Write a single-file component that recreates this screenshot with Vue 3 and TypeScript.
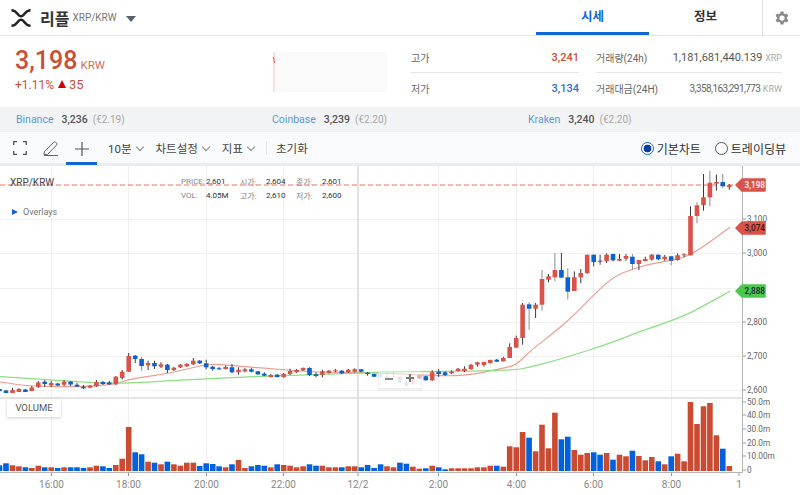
<template>
  <div class="page">
    <header class="top">
      <div class="coin">
        <svg class="logo" viewBox="0 0 20 18" width="20" height="18">
          <path d="M.5 1.200C4.500 1.200 5.500 3.600 7.500 6 8.800 7.600 11.200 7.600 12.500 6 14.500 3.600 15.500 1.200 19.500 1.200M.5 16.800C4.500 16.800 5.500 14.400 7.500 12 8.800 10.400 11.200 10.400 12.500 12 14.500 14.400 15.500 16.800 19.500 16.800" fill="none" stroke="#222" stroke-width="2.500" />
        </svg>
        <span class="coin-name">리플</span>
        <span class="coin-pair">XRP/KRW</span>
        <span class="caret"></span>
      </div>
      <nav class="tabs">
        <div class="tab active">시세</div>
        <div class="tab">정보</div>
        <div class="gear">
          <svg viewBox="1 0 24 24" width="18" height="18">
            <path fill="#8a8a8a" d="M19.400 13a7.500 7.500 0 0 0 0-2l2.100-1.600-2-3.500-2.500 1a7.600 7.600 0 0 0-1.700-1L15 3.200h-4l-.4 2.700a7.600 7.600 0 0 0-1.700 1l-2.500-1-2 3.500L6.500 11a7.500 7.500 0 0 0 0 2l-2.100 1.600 2 3.500 2.500-1a7.600 7.600 0 0 0 1.700 1l.4 2.700h4l.4-2.700a7.600 7.600 0 0 0 1.700-1l2.500 1 2-3.500zM13 15.500a3.500 3.500 0 1 1 0-7 3.500 3.500 0 0 1 0 7z" />
          </svg>
        </div>
      </nav>
    </header>

    <section class="stats">
      <div class="price">
        <div class="now"><span class="now-value">3,198</span><span class="now-unit">KRW</span></div>
        <div class="change">+1.11% <i class="up"></i> <span class="diff">35</span></div>
      </div>
      <svg class="spark" viewBox="0 0 114 40" width="114" height="40">
        <line x1="1" y1="0" x2="1" y2="40" stroke="#f3c9c2" stroke-width="1" />
        <line x1="0.5" y1="5" x2="1.5" y2="11" stroke="#d0614d" stroke-width="1" />
      </svg>
      <div class="hilo">
        <div class="row"><span>고가</span><b class="red">3,241</b></div>
        <div class="row"><span>저가</span><b class="blue">3,134</b></div>
      </div>
      <div class="volume">
        <div class="row">
          <span>거래량(24h)</span>
          <em class="big">1,181,681,440.139 <small>XRP</small></em>
        </div>
        <div class="row">
          <span>거래대금(24H)</span>
          <em><u>3,358,163,291,773</u> <small>KRW</small></em>
        </div>
      </div>
    </section>

    <section class="exchanges">
      <div v-for="ex in exchanges" :key="ex.name" class="exchange">
        <span class="ex-name">{{ ex.name }}</span>
        <b>{{ ex.price }}</b>
        <span class="ex-eur">({{ ex.eur }})</span>
      </div>
    </section>

    <section class="toolbar">
      <svg class="tool-full" viewBox="0 0 14 14" width="14" height="14">
        <path d="M.7 4V.7H4M10 .7h3.300V4M13.300 10v3.300H10M4 13.300H.7V10" fill="none" stroke="#555" stroke-width="1.300" />
      </svg>
      <svg class="tool-pen" viewBox="0 0 16 16" width="16" height="16">
        <path d="M1.500 11.500 10.800 2.200a1.300 1.300 0 0 1 1.900 0l.9.9a1.300 1.300 0 0 1 0 1.900L4.500 14.500H1z M1 15.500h14" fill="none" stroke="#666" stroke-width="1" />
      </svg>
      <div class="tool-cross">
        <svg viewBox="0 0 14 14" width="14" height="14">
          <path d="M7 0v14M0 7h14" stroke="#555" stroke-width="1.200" />
        </svg>
      </div>
      <button class="menu first">10분<i></i></button>
      <button class="menu">차트설정<i></i></button>
      <button class="menu">지표<i></i></button>
      <span class="tool-sep"></span>
      <button class="menu plain">초기화</button>
      <div class="views">
        <span class="radio on"></span><span class="view">기본차트</span>
        <span class="radio"></span><span class="view">트레이딩뷰</span>
      </div>
    </section>

    <section class="chart">
      <svg class="plot" viewBox="0 167 800 328" width="800" height="328">
        <line v-for="y in gridY" :key="'h' + y" x1="0" :x2="742" :y1="y" :y2="y" stroke="#f1f1f1" />
        <line v-for="x in gridX" :key="'v' + x" :x1="x" :x2="x" y1="167" y2="473" stroke="#efefef" />
        <line x1="358" x2="358" y1="167" y2="473" stroke="#e2e2e2" stroke-width="2" />
        <line class="last-price" x1="0" x2="736" y1="186" y2="186" />

        <path :d="maRed" fill="none" stroke="#ee9c92" stroke-width="1.200" />
        <path :d="maGreen" fill="none" stroke="#8ede86" stroke-width="1.200" />

        <g v-for="c in candles" :key="c.i">
          <line :x1="c.x" :x2="c.x" :y1="c.wickTop" :y2="c.wickBottom" :stroke="c.wick" stroke-width="1" :opacity="c.faded ? 0.25 : 1" />
          <rect :x="c.x - 2.3" :y="c.top" width="4.6" :height="c.height" :fill="c.color" :opacity="c.faded ? 0.25 : 1" />
        </g>

        <line x1="0" x2="742" y1="399" y2="399" stroke="#dcdcdc" stroke-width="1.500" />
        <rect v-for="c in candles" :key="'vol' + c.i" :x="c.x - 2.8" :y="472 - c.vol" width="5.6" :height="c.vol" :fill="c.barColor" />
        <line x1="0" x2="742" y1="473.5" y2="473.5" stroke="#b5b5b5" />
        <line x1="742.5" x2="742.5" y1="167" y2="474" stroke="#b5b5b5" />

        <g v-for="t in priceTicks" :key="t.label">
          <line x1="743" x2="746" :y1="t.y" :y2="t.y" stroke="#999" />
          <text class="tick" x="747" :y="t.y + 3">{{ t.label }}</text>
        </g>
        <g v-for="t in volTicks" :key="t.label">
          <line x1="743" x2="746" :y1="t.y" :y2="t.y" stroke="#999" />
          <text class="tick" x="747" :y="t.y + 3">{{ t.label }}</text>
        </g>
        <g v-for="t in timeTicks" :key="t.label">
          <line :x1="t.x" :x2="t.x" y1="474" y2="477" stroke="#999" />
          <text class="time" :x="t.x" y="488.500" text-anchor="middle">{{ t.label }}</text>
        </g>

        <g v-for="t in tags" :key="t.label">
          <path :d="tagPath(t.y)" :fill="t.color" :stroke="t.color" stroke-width="1.500" stroke-linejoin="round" />
          <text class="tag" x="744.500" :y="t.y + 3" :fill="t.text">{{ t.label }}</text>
        </g>
      </svg>

      <div class="legend">
        <div class="symbol">XRP/KRW</div>
        <div class="ohlc">
          <span class="k">PRICE:</span><span class="v">2,601</span>
          <span class="k">시가:</span><span class="v">2,604</span>
          <span class="k">종가:</span><span class="v">2,601</span>
          <span class="k">VOL:</span><span class="v">4.05M</span>
          <span class="k">고가:</span><span class="v">2,610</span>
          <span class="k">저가:</span><span class="v">2,600</span>
        </div>
        <div class="overlays"><i></i>Overlays</div>
      </div>

      <div class="zoomer"><span class="minus"></span><span class="plus"></span></div>
      <div class="vol-label">VOLUME</div>
    </section>
  </div>
</template>

<script setup lang="ts">
type Raw = [number, number, number, number, 'r' | 'b'];

interface Exchange {
  name: string;
  price: string;
  eur: string;
}

const exchanges: Exchange[] = [
  { name: 'Binance', price: '3,236', eur: '€2.19' },
  { name: 'Coinbase', price: '3,239', eur: '€2.20' },
  { name: 'Kraken', price: '3,240', eur: '€2.20' }
];

const gridY = [220.5, 254.5, 289.5, 323.5, 357.5, 391.5];
const gridX = [51.5, 128.5, 206.5, 283.5, 438.5, 516.5, 593.5, 671.5];

const priceTicks = [
  { label: '3,100', y: 220 },
  { label: '3,000', y: 254 },
  { label: '2,800', y: 323 },
  { label: '2,700', y: 357 },
  { label: '2,600', y: 391 }
];
const volTicks = [
  { label: '50.0m', y: 403 },
  { label: '40.0m', y: 416 },
  { label: '30.0m', y: 430 },
  { label: '20.0m', y: 444 },
  { label: '10.00m', y: 457 },
  { label: '0', y: 471 }
];
const timeTicks = [
  { label: '16:00', x: 51.5 },
  { label: '18:00', x: 128.5 },
  { label: '20:00', x: 206.5 },
  { label: '22:00', x: 283.5 },
  { label: '12/2', x: 358 },
  { label: '2:00', x: 438.5 },
  { label: '4:00', x: 516.5 },
  { label: '6:00', x: 593.5 },
  { label: '8:00', x: 671.5 },
  { label: '1', x: 739 }
];
const tags = [
  { label: '3,198', y: 186, color: '#d9534a', text: '#fff' },
  { label: '3,074', y: 229, color: '#d9534a', text: '#3a1512' },
  { label: '2,888', y: 292, color: '#4cc851', text: '#123' }
];

const tagPath = (y: number) =>
  `M736 ${y} L742 ${y - 6} H765 V${y + 6} H742 Z`;

// top, bottom of body and wick, pixel rows, from candle -20 (far left) on
const raw: Raw[] = [
  [390, 392, 390, 392, 'b'], [391.5, 394, 391, 394, 'b'], [391, 394, 389, 394, 'r'], [390, 393, 389, 393, 'r'],
  [390.5, 393, 390, 393, 'b'], [388.5, 392, 387, 392, 'r'], [383.5, 388, 382, 389, 'r'], [382.7, 385, 381, 388, 'b'],
  [384, 386.5, 382, 388, 'r'], [384.5, 386.5, 384, 387, 'b'], [382.7, 385.7, 381, 387, 'r'], [382.7, 385.5, 382, 387, 'b'],
  [385.7, 387.7, 384, 388, 'b'], [387.7, 389.3, 386, 390, 'b'], [386.7, 388.7, 386, 389, 'r'], [383, 387.3, 381, 388, 'r'],
  [383, 385, 382, 386, 'b'], [383.5, 385.3, 382, 386, 'b'], [377.7, 385.3, 377, 386, 'r'], [372.7, 379, 371, 380.5, 'r'],
  [357, 372.7, 354, 373, 'r'], [356.7, 360, 356, 364, 'b'], [360, 367, 358, 371.7, 'b'], [364, 366.3, 361.7, 371, 'r'],
  [364, 367.3, 361.7, 370, 'b'], [365.3, 367.7, 363.3, 369, 'r'], [365.7, 371, 365, 374, 'b'], [368.7, 371, 368, 372, 'r'],
  [365.7, 368.3, 365, 369, 'r'], [365, 367.3, 364, 368, 'r'], [361.7, 365.3, 359, 366, 'r'], [361.7, 364.3, 361, 365, 'b'],
  [364.3, 368.3, 360.7, 370.3, 'b'], [367.7, 370, 366.7, 371.7, 'b'], [369.3, 370.3, 368, 371, 'b'], [368, 370, 366.7, 370.5, 'r'],
  [368.3, 373.3, 365, 374, 'b'], [370.7, 373.3, 368.3, 375.7, 'r'], [370.3, 372.3, 369, 373.3, 'r'], [370.3, 372.7, 369, 373.3, 'b'],
  [372.3, 375.3, 372, 376, 'b'], [374.7, 376.7, 373.3, 377, 'b'], [376, 378, 375, 378.5, 'r'], [375.7, 378, 375, 378.5, 'b'],
  [375, 378, 374, 378.7, 'r'], [372, 375, 369.7, 376, 'r'], [371, 373.3, 370, 374, 'r'], [369, 371.3, 368.5, 372, 'r'],
  [369, 376, 368.3, 377, 'b'], [375.3, 377, 373.3, 378.3, 'b'], [372.3, 375.7, 370.7, 378.3, 'r'], [371.7, 374, 371, 374.7, 'r'],
  [371.3, 372, 370, 373.3, 'r'], [371.7, 374.3, 371, 375, 'b'], [370.7, 373.3, 370, 374, 'r'], [370.3, 372.7, 369.3, 373.3, 'r'],
  [370.3, 372.7, 370, 373.3, 'b'], [373.7, 375, 373, 376.7, 'b'], [375, 377.7, 374.7, 378, 'b'], [375, 378, 374, 379, 'b'],
  [378, 379.5, 372, 380, 'r'], [377, 378, 372, 380, 'r'], [377.7, 383.3, 377, 384, 'b'], [383, 386.7, 382, 387, 'b'],
  [379.3, 385, 379, 386, 'r'], [376, 379.3, 375.5, 380, 'r'], [377.3, 381.3, 377, 381.5, 'b'], [373.3, 381.3, 371.3, 382, 'r'],
  [372.7, 375, 370, 378, 'b'], [373.3, 376, 372.3, 377, 'b'], [372.7, 374.3, 371.3, 375, 'r'], [369.7, 372, 369, 372.5, 'r'],
  [369.7, 372, 367.3, 373, 'r'], [365.7, 370.3, 365, 370.5, 'r'], [363.3, 365.7, 362.7, 367.7, 'r'], [363, 366, 362.7, 367.7, 'r'],
  [361, 364, 360.7, 364.5, 'r'], [360.7, 362.7, 360, 363, 'b'], [359, 362.3, 357.7, 362.5, 'r'], [348, 359, 344.3, 359, 'r'],
  [339, 348.7, 336.7, 348.7, 'r'], [305.7, 339, 304, 345.7, 'r'], [305.3, 309.7, 303.3, 330.7, 'b'], [305.7, 309.7, 304, 319, 'r'],
  [280, 305.7, 271, 311.7, 'r'], [277.3, 280.7, 275, 283.3, 'r'], [271, 278.3, 254, 282.3, 'r'], [271, 278.7, 254, 278.7, 'b'],
  [278.3, 292.7, 269.3, 300.3, 'b'], [278.3, 292, 272.3, 292, 'r'], [274, 278.3, 270, 284.3, 'r'], [255.7, 274, 255.7, 275, 'r'],
  [255.7, 263, 255.7, 267.3, 'b'], [261.7, 262.7, 255.7, 265.7, 'b'], [255.7, 262, 254.3, 264, 'r'], [255, 261.3, 254.7, 262.3, 'b'],
  [260, 261.7, 255, 262.3, 'r'], [257, 259.7, 255, 261.7, 'r'], [257.7, 265, 255, 270.7, 'b'], [261, 265, 261, 271, 'r'],
  [260, 262, 257.7, 262.3, 'r'], [255.7, 260.7, 255, 261.7, 'r'], [255.7, 260.3, 255.7, 261, 'b'], [257.7, 260.3, 256, 261.7, 'r'],
  [257.3, 261.7, 257, 266.3, 'b'], [256.3, 261, 254.3, 261.7, 'r'], [255.3, 256, 254.3, 258.3, 'r'], [217, 256.3, 207.3, 256.3, 'r'],
  [206.3, 217, 203.3, 224.3, 'r'], [198.3, 206, 175, 211.7, 'r'], [183.7, 198.3, 171.7, 207.3, 'r'], [183, 184.7, 175.7, 191.7, 'r'],
  [183, 187.3, 175, 189, 'b'], [186.3, 188, 185, 190.7, 'r']
];

const volumes = [
  5.7, 7.7, 5.7, 4.7, 3.7, 3, 5.3, 3.7, 3.7, 3, 3.7, 3.7, 3.7, 3, 3.7, 5.3, 4.7, 3, 6, 12.3,
  44, 18.7, 16.7, 9.3, 8.3, 6.7, 9.3, 6.7, 5.3, 8.3, 8.3, 5, 7.7, 7, 4.7, 3.7, 6.7, 11, 3, 4.7,
  6, 5.3, 3.7, 6.7, 6, 5.3, 3.7, 4.7, 6.7, 5.3, 5.3, 3.7, 3.7, 3.7, 4.7, 4.7, 3.7, 6, 3, 6.7,
  4.7, 3.7, 8.3, 7.3, 4.3, 2.3, 2.7, 5.3, 3.7, 1.7, 2.7, 2.7, 2.7, 2.7, 3.7, 3.7, 5.3, 5.3, 4.3, 24.7,
  23.7, 39, 33.3, 19.7, 46.3, 22.7, 58.3, 31.7, 34.3, 21, 16.3, 18, 18.7, 16.3, 18, 11.3, 16.3, 14.7, 20.3, 15,
  10.7, 14, 9.7, 6.7, 14.7, 17.3, 9.7, 69, 47, 64.7, 68, 35.7, 22.3, 5
];

const greyWicks = new Set([2, 62, 64, 66, 68, 78, 84, 88, 90, 92]);

const candles = raw.map((r, n) => {
  const i = n - 20;
  return {
    i,
    x: +(128.7 + 6.458 * i).toFixed(1),
    top: r[0],
    height: Math.max(r[1] - r[0], 1),
    wickTop: r[2],
    wickBottom: r[3],
    color: r[4] === 'r' ? '#d9534a' : '#0b63ce',
    barColor: r[4] === 'r' ? '#c94c32' : '#0061dc',
    wick: greyWicks.has(i) ? '#8d8d8d' : '#3a3a3a',
    vol: volumes[n],
    faded: i >= 39 && i <= 44
  };
});

// rounds the read-off points into a curve through their midpoints
const smooth = (pts: number[][]) => {
  let d = `M${pts[0][0]} ${pts[0][1]}`;
  for (let i = 1; i < pts.length - 1; i++) {
    const mx = (pts[i][0] + pts[i + 1][0]) / 2;
    const my = (pts[i][1] + pts[i + 1][1]) / 2;
    d += ` Q${pts[i][0]} ${pts[i][1]} ${mx} ${my}`;
  }
  const last = pts[pts.length - 1];
  return `${d} L${last[0]} ${last[1]}`;
};

const maRed = smooth([
  [0, 383], [20, 386], [38, 387.5], [83, 387.7], [113, 385.7], [133, 379.3], [167, 375], [203, 366], [217, 365],
  [233, 366.7], [283, 370.7], [317, 373.3], [367, 373.3], [420, 376], [463, 377.3], [503, 369.3], [516, 366],
  [527, 355], [540, 344.3], [552, 335], [570, 320], [583, 306.7], [612, 278], [633, 270], [650, 265], [683, 259.3],
  [700, 250], [730, 228.3]
]);
const maGreen = smooth([
  [0, 377.7], [50, 380.7], [97, 384], [127, 384.3], [200, 380], [250, 377.7], [333, 375], [400, 372.7], [513, 371.7],
  [533, 367.3], [567, 358.3], [613, 343.3], [633, 335], [683, 317.7], [707, 305], [730, 292.3]
]);
</script>

<style>
html,
body {
  margin: 0;
  background: #fff;
}
</style>

<style scoped>
.page {
  width: 800px;
  height: 495px;
  overflow: hidden;
  font-family: Roboto, "Noto Sans CJK KR", sans-serif;
  color: #333;
}

.top {
  display: flex;
  justify-content: space-between;
  height: 35px;
  border-bottom: 1px solid #e6e6e6;
}

.coin {
  display: flex;
  align-items: center;
  padding-left: 11px;
}

.coin-name {
  margin-left: 9px;
  font-size: 16px;
  font-weight: 700;
  color: #333;
}

.coin-pair {
  margin-left: 3px;
  font-size: 10px;
  color: #777;
}

.caret {
  margin-left: 9px;
  margin-top: 2px;
  border-left: 5.5px solid transparent;
  border-right: 5.5px solid transparent;
  border-top: 6px solid #5c6068;
}

.tabs {
  display: flex;
}

.tab {
  width: 113px;
  height: 32px;
  line-height: 33px;
  text-align: center;
  font-size: 12.5px;
  font-weight: 700;
  color: #333;
  border-bottom: 3px solid transparent;
}

.tab.active {
  color: #1266d6;
  border-bottom-color: #1266d6;
}

.gear {
  display: flex;
  align-items: center;
  justify-content: center;
  width: 37px;
  border-left: 1px solid #e0e0e0;
}

.stats {
  display: flex;
  height: 71px;
}

.price {
  width: 273px;
  padding: 10px 0 0 15px;
  box-sizing: border-box;
  color: #c9503a;
}

.now {
  display: flex;
  align-items: baseline;
  height: 30px;
}

.now-value {
  font-size: 25px;
  line-height: 30px;
  font-weight: 500;
}

.now-unit {
  margin-left: 3px;
  font-size: 11.5px;
  color: #d4705e;
}

.change {
  font-size: 12px;
  line-height: 18px;
}

.diff {
  font-size: 13px;
}

.up {
  display: inline-block;
  margin: 0 0 1px 1px;
  border-left: 4.5px solid transparent;
  border-right: 4.5px solid transparent;
  border-bottom: 8px solid #d40000;
}

.spark {
  margin-top: 16px;
  background: #fafafa;
}

.hilo {
  width: 168px;
  margin: 6px 0 0 24px;
}

.volume {
  width: 186px;
  margin: 6px 0 0 17px;
}

.row {
  display: flex;
  align-items: center;
  justify-content: space-between;
  height: 30px;
  font-size: 10px;
  color: #666;
}

.row:first-child {
  border-bottom: 1px solid #e6e6e6;
}

.row b {
  font-size: 11px;
  font-weight: 500;
}

.red {
  color: #c9503a;
}

.blue {
  color: #2f6fd0;
}

.row em {
  font-style: normal;
  font-size: 10px;
}

.row em.big {
  font-size: 11px;
  color: #555;
}

.row u {
  text-decoration: none;
  letter-spacing: -0.6px;
}

.row small {
  font-size: 9px;
  color: #aaa;
}

.exchanges {
  display: flex;
  height: 25px;
  align-items: center;
  background: #f1f3f5;
  font-size: 10.5px;
}

.exchange {
  display: flex;
  align-items: baseline;
  width: 256px;
  box-sizing: border-box;
  padding-left: 16px;
  gap: 8px;
}

.ex-name {
  color: #5b9bd5;
}

.exchange b {
  font-weight: 500;
  color: #555;
}

.ex-eur {
  margin-left: -3px;
  font-size: 10px;
  color: #a8a8a8;
}

.toolbar {
  display: flex;
  align-items: center;
  height: 30px;
  margin-top: 1px;
  border-bottom: 3px solid #e9edf1;
  background: #f8fafb;
  font-size: 11.5px;
}

.tool-full {
  margin-left: 13px;
}

.tool-pen {
  margin-left: 16px;
}

.tool-cross {
  display: flex;
  align-items: center;
  justify-content: center;
  box-sizing: border-box;
  width: 31px;
  height: 30px;
  margin-left: 7px;
  border-bottom: 3px solid #1266d6;
  margin-bottom: -3px;
  padding-top: 1px;
}

.menu {
  display: flex;
  align-items: center;
  border: 0;
  padding: 0;
  margin-left: 12px;
  background: none;
  font: inherit;
  color: #444;
}

.menu.first {
  margin-left: 11px;
}

.menu i {
  width: 5px;
  height: 5px;
  margin: -3px 1px 0 5px;
  border-right: 1px solid #888;
  border-bottom: 1px solid #888;
  transform: rotate(45deg);
}

.tool-sep {
  width: 1px;
  height: 14px;
  margin-left: 11px;
  background: #e4e6e8;
}

.menu.plain {
  margin-left: 9px;
}

.views {
  display: flex;
  align-items: center;
  margin-left: auto;
  padding-right: 14px;
  color: #333;
  font-size: 12px;
}

.radio {
  box-sizing: border-box;
  width: 13px;
  height: 13px;
  margin-left: 14px;
  border: 1px solid #555;
  border-radius: 50%;
  background: #fff;
}

.radio.on {
  border-color: #1266d6;
  background: radial-gradient(circle, #0d3ea3 0 3.6px, #fff 4.2px);
}

.view {
  margin-left: 3px;
}

.chart {
  position: relative;
  height: 328px;
}

.plot {
  display: block;
}

.last-price {
  stroke: #e8705f;
  stroke-dasharray: 5 3;
}

.tick {
  font-size: 8.2px;
  fill: #666;
}

.time {
  font-size: 10px;
  fill: #888;
}

.tag {
  font-size: 8.2px;
  font-weight: 500;
}

.legend {
  position: absolute;
  top: 0;
  left: 0;
}

.symbol {
  position: absolute;
  top: 11px;
  left: 10px;
  font-size: 10px;
  color: #444;
  white-space: nowrap;
}

.ohlc {
  position: absolute;
  top: 8px;
  left: 181px;
  display: grid;
  grid-template-columns: 25px 34px 26px 30px 26px 24px;
  grid-auto-rows: 14px;
  align-items: center;
  font-size: 8px;
  color: #333;
  white-space: nowrap;
}

.k {
  color: #888;
}

.overlays {
  position: absolute;
  top: 41px;
  left: 12px;
  display: flex;
  align-items: center;
  font-size: 9px;
  color: #777;
  white-space: nowrap;
}

.overlays i {
  width: 0;
  height: 0;
  margin-right: 5px;
  border-top: 3.5px solid transparent;
  border-bottom: 3.5px solid transparent;
  border-left: 6px solid #1a63d4;
}

.zoomer {
  position: absolute;
  left: 378px;
  top: 205px;
  width: 42px;
  height: 16px;
  background: rgba(255, 255, 255, 0.55);
  border: 1px solid rgba(0, 0, 0, 0.06);
  box-shadow: 0 1px 2px rgba(0, 0, 0, 0.08);
}

.minus {
  position: absolute;
  left: 6px;
  top: 6px;
  width: 8px;
  height: 2px;
  background: #888;
}

.plus {
  position: absolute;
  left: 27px;
  top: 2px;
  width: 8px;
  height: 8px;
  background:
    linear-gradient(#777, #777) center / 8px 2px no-repeat,
    linear-gradient(#777, #777) center / 2px 8px no-repeat;
}

.vol-label {
  position: absolute;
  left: 7px;
  top: 233px;
  width: 54px;
  height: 18px;
  line-height: 18px;
  text-align: center;
  font-size: 9.5px;
  color: #555;
  background: #fff;
  box-shadow: 0 1px 3px rgba(0, 0, 0, 0.2);
}
</style>
